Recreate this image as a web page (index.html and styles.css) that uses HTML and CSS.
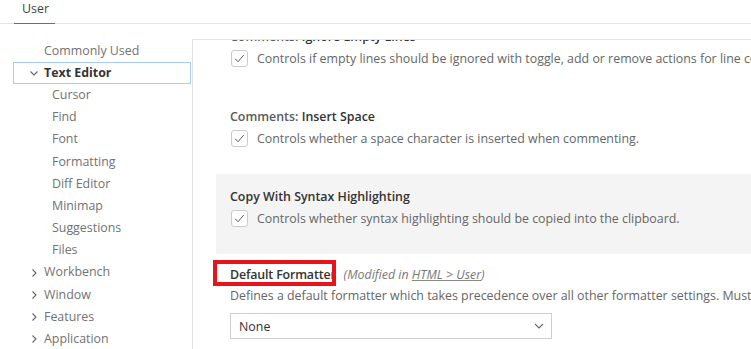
FILE: index.html
```html
<!DOCTYPE html>
<html>
<head>
<meta charset="utf-8">
<link rel="stylesheet" href="styles.css">
</head>
<body>
<div class="tabbar">
  <div class="tab">User</div>
</div>
<div class="main">
  <nav class="sidebar">
    <div class="toc-row lvl1">Commonly Used</div>
    <div class="toc-row lvl1 selected bold"><svg class="chev" viewBox="0 0 10 10"><path d="M1.5 3.5 L5 7 L8.5 3.5"/></svg>Text Editor</div>
    <div class="toc-row lvl2">Cursor</div>
    <div class="toc-row lvl2">Find</div>
    <div class="toc-row lvl2">Font</div>
    <div class="toc-row lvl2">Formatting</div>
    <div class="toc-row lvl2">Diff Editor</div>
    <div class="toc-row lvl2">Minimap</div>
    <div class="toc-row lvl2">Suggestions</div>
    <div class="toc-row lvl2">Files</div>
    <div class="toc-row lvl1"><svg class="chev" viewBox="0 0 10 10"><path d="M3.5 1.5 L7 5 L3.5 8.5"/></svg>Workbench</div>
    <div class="toc-row lvl1"><svg class="chev" viewBox="0 0 10 10"><path d="M3.5 1.5 L7 5 L3.5 8.5"/></svg>Window</div>
    <div class="toc-row lvl1"><svg class="chev" viewBox="0 0 10 10"><path d="M3.5 1.5 L7 5 L3.5 8.5"/></svg>Features</div>
    <div class="toc-row lvl1"><svg class="chev" viewBox="0 0 10 10"><path d="M3.5 1.5 L7 5 L3.5 8.5"/></svg>Application</div>
  </nav>
  <section class="content">
    <div class="scroller">
      <div class="setting">
        <div class="title"><span class="cat">Comments: </span>Ignore Empty Lines</div>
        <div class="checkrow"><span class="checkbox"><svg viewBox="0 0 17 17"><path d="M3.5 8.8 L6.8 12.2 L13.3 4.6"/></svg></span><span class="desc">Controls if empty lines should be ignored with toggle, add or remove actions for line comments.</span></div>
      </div>
      <div class="setting">
        <div class="title"><span class="cat">Comments: </span>Insert Space</div>
        <div class="checkrow"><span class="checkbox"><svg viewBox="0 0 17 17"><path d="M3.5 8.8 L6.8 12.2 L13.3 4.6"/></svg></span><span class="desc">Controls whether a space character is inserted when commenting.</span></div>
      </div>
      <div class="setting focused">
        <div class="title">Copy With Syntax Highlighting</div>
        <div class="checkrow"><span class="checkbox"><svg viewBox="0 0 17 17"><path d="M3.5 8.8 L6.8 12.2 L13.3 4.6"/></svg></span><span class="desc">Controls whether syntax highlighting should be copied into the clipboard.</span></div>
      </div>
      <div class="setting last">
        <div class="title"><span class="tight">Default Formatter</span><span class="modified">(Modified in <u>HTML &gt; User</u>)</span></div>
        <div class="desc line">Defines a default formatter which takes precedence over all other formatter settings. Must be the identifier of an extension contributing a formatter.</div>
        <div class="select"><span>None</span><svg viewBox="0 0 12 12"><path d="M2 4 L6 8 L10 4"/></svg></div>
        <div class="highlight"></div>
      </div>
    </div>
  </section>
</div>
</body>
</html>
```

FILE: styles.css
```css
* { box-sizing: border-box; }
html, body { margin: 0; padding: 0; background: #fff; }
body {
  width: 751px;
  height: 349px;
  overflow: hidden;
  font-family: "Open Sans", "Noto Sans", sans-serif;
  font-size: 12.4px;
  color: #616161;
}
.tabbar {
  height: 24px;
  border-bottom: 1px solid #e4e4e4;
  padding-left: 14px;
  display: flex;
}
.tab {
  width: 41px;
  height: 24px;
  padding-left: 8px;
  line-height: 18px;
  color: #444;
  border-bottom: 1px solid #6f6f6f;
}
.main {
  display: flex;
  height: 325px;
}
.sidebar {
  width: 192px;
  padding-top: 15.5px;
  padding-left: 13px;
  flex: none;
}
.toc-row {
  height: 22.2px;
  line-height: 20px;
  white-space: nowrap;
  color: #727272;
  display: flex;
  align-items: center;
  border: 1px solid transparent;
  width: 178px;
}
.toc-row.lvl1 { padding-left: 30px; position: relative; }
.toc-row.lvl2 { padding-left: 38px; }
.toc-row.bold { font-weight: 700; color: #333; }
.toc-row.selected { border-color: #a9cdf1; }
.chev {
  position: absolute;
  left: 15px;
  top: 5.5px;
  width: 10px;
  height: 10px;
  fill: none;
  stroke: #666;
  stroke-width: 1.1;
}
.content {
  flex: 1;
  border-top: 1px solid #e6e6e6;
  border-left: 1px solid #e2e2e2;
  margin-top: 15px;
  overflow: hidden;
}
.scroller {
  margin-top: -26px;
}
.setting {
  margin-left: 23px;
  padding: 13px 0 0 14px;
  height: 80px;
  position: relative;
}
.setting.focused { background: #f4f4f4; }
.title {
  height: 20px;
  line-height: 20px;
  font-weight: 600;
  color: #333;
  white-space: nowrap;
}
.title .cat { color: #5a5a5a; }
.title .tight { letter-spacing: -0.15px; }
.checkrow {
  margin-top: 3px;
  display: flex;
  align-items: center;
  height: 17px;
  white-space: nowrap;
}
.checkbox {
  width: 17px;
  height: 17px;
  border: 1px solid #cbcbcb;
  border-radius: 3px;
  background: #fff;
  flex: none;
  margin-left: 1px;
  margin-right: 9px;
  display: flex;
}
.checkbox svg {
  width: 15px;
  height: 15px;
  fill: none;
  stroke: #555;
  stroke-width: 1.1;
}
.desc { color: #666; }
.setting.last { padding-top: 11px; height: 96px; }
.modified {
  font-weight: 400;
  font-style: italic;
  color: #777;
  margin-left: 8px;
}
.modified u { text-decoration-color: #888; }
.desc.line {
  height: 20px;
  line-height: 22px;
  white-space: nowrap;
}
.select {
  margin-top: 8px;
  width: 322px;
  height: 26px;
  border: 1px solid #cecece;
  display: flex;
  align-items: center;
  justify-content: space-between;
  padding: 0 6px 0 8px;
  color: #333;
}
.select svg {
  width: 12px;
  height: 12px;
  fill: none;
  stroke: #666;
  stroke-width: 1.1;
}
.highlight {
  position: absolute;
  left: -3px;
  top: 6px;
  width: 123px;
  height: 26px;
  border: 4px solid #e8141c;
}
```
